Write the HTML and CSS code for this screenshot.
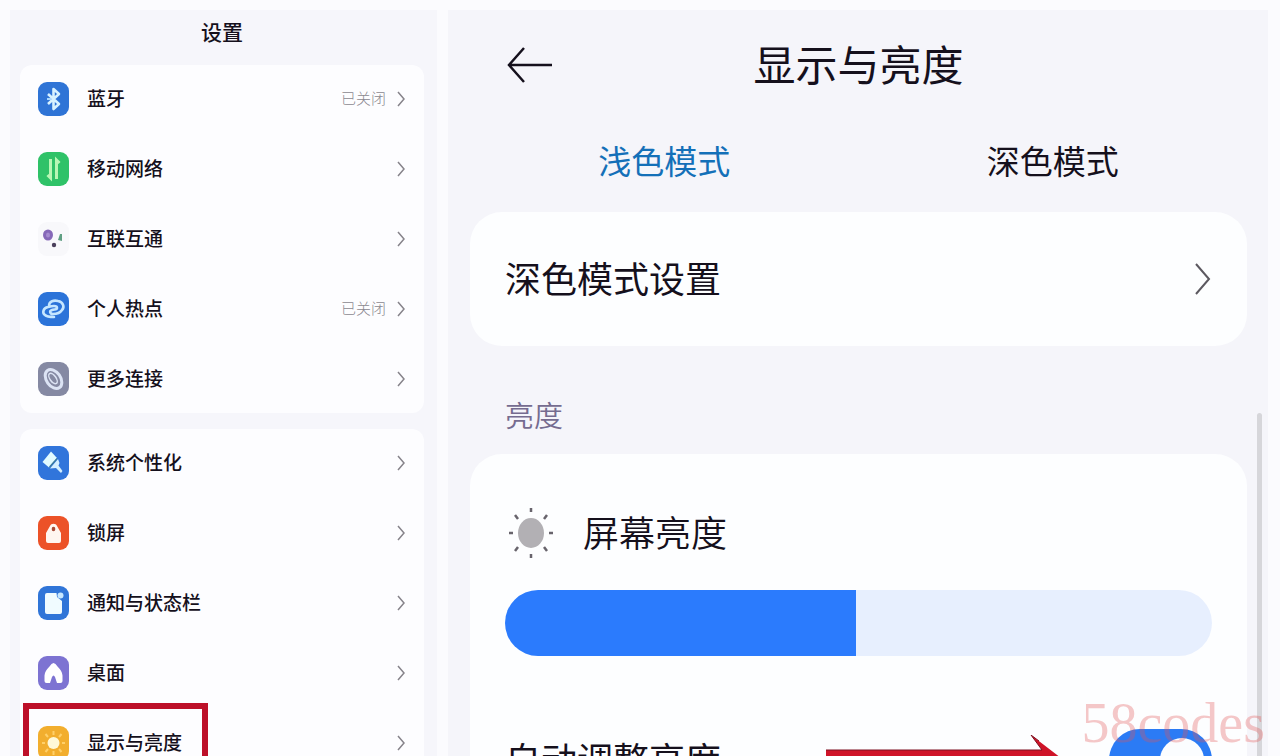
FILE: index.html
```html
<!DOCTYPE html>
<html lang="zh-CN">
<head>
  <meta charset="UTF-8">
  <title>设置</title>
  <link rel="stylesheet" href="styles.css">
</head>
<body>

<svg class="sprite" aria-hidden="true">
  <symbol id="chevron" viewBox="0 0 9 16">
    <path d="M1 1l6 7-6 7" fill="none" stroke="currentColor" stroke-width="1.5"/>
  </symbol>
</svg>

<div class="screens">

  <!-- Liste des réglages -->
  <nav class="panel settings">
    <h1 class="settings-title">设置</h1>

    <div class="group">
      <a class="row" href="#">
        <svg class="icon" viewBox="0 0 31 34">
          <rect width="31" height="34" rx="9" fill="#2f74d6"/>
          <path d="M10 12l11 10-5.500 5V7l5.500 5-11 10" fill="none" stroke="#d8f2ff" stroke-width="2.600" stroke-linejoin="round"/>
          <path d="M9 17h4" stroke="#a9d8ff" stroke-width="2"/>
        </svg>
        <span class="label">蓝牙</span>
        <span class="status">已关闭</span>
        <svg class="chevron"><use href="#chevron"/></svg>
      </a>
      <a class="row" href="#">
        <svg class="icon" viewBox="0 0 31 34">
          <rect width="31" height="34" rx="9" fill="#2fc268"/>
          <path d="M12.500 7v19l-3-3M18.500 27V8l3 3" fill="none" stroke="#b8f7b4" stroke-width="3"/>
        </svg>
        <span class="label">移动网络</span>
        <svg class="chevron"><use href="#chevron"/></svg>
      </a>
      <a class="row" href="#">
        <svg class="icon" viewBox="0 0 31 34">
          <rect width="31" height="34" rx="9" fill="#f8f8fb"/>
          <ellipse cx="10" cy="13" rx="5" ry="5.500" fill="#8668b8"/>
          <ellipse cx="10" cy="13" rx="2" ry="2.500" fill="#a58bd0"/>
          <path d="M22 12l2 0v7l-4-1z" fill="#5f9f83"/>
          <circle cx="16" cy="23" r="2.200" fill="#4b405c"/>
        </svg>
        <span class="label">互联互通</span>
        <svg class="chevron"><use href="#chevron"/></svg>
      </a>
      <a class="row" href="#">
        <svg class="icon" viewBox="0 0 31 34">
          <rect width="31" height="34" rx="9" fill="#2b73d9"/>
          <path d="M11 14c0-5 5-6 9-5 5 1 7 6 4 9-2 3-6 4-9 4-3 0-4-3-1-4 2-1 5 0 5-2 0-3-5-2-9-1-5 1-6 6-3 8 2 2 6 2 9 2" fill="none" stroke="#c5e6ff" stroke-width="2.600" stroke-linecap="round"/>
        </svg>
        <span class="label">个人热点</span>
        <span class="status">已关闭</span>
        <svg class="chevron"><use href="#chevron"/></svg>
      </a>
      <a class="row" href="#">
        <svg class="icon" viewBox="0 0 31 34">
          <rect width="31" height="34" rx="9" fill="#8589a3"/>
          <ellipse cx="15.500" cy="17" rx="7" ry="10.500" transform="rotate(-35 15.500 17)" fill="none" stroke="#dce3f4" stroke-width="3"/>
          <ellipse cx="15" cy="16.500" rx="3" ry="6" transform="rotate(-35 15 16.500)" fill="none" stroke="#dce3f4" stroke-width="1.500"/>
        </svg>
        <span class="label">更多连接</span>
        <svg class="chevron"><use href="#chevron"/></svg>
      </a>
    </div>

    <div class="group">
      <a class="row" href="#">
        <svg class="icon" viewBox="0 0 31 34">
          <rect width="31" height="34" rx="9" fill="#3175db"/>
          <path d="M4.500 16L13 5.500l6 6.500-8 9.500z" fill="#e2fbff"/>
          <path d="M12 22.500l8-9.500 1.500 4-1 2.500 4 5.500-1.500 2-5-5z" fill="#d4efff"/>
          <path d="M11.500 21l7.500-8.500" stroke="#3b7b9b" stroke-width="1.200"/>
        </svg>
        <span class="label">系统个性化</span>
        <svg class="chevron"><use href="#chevron"/></svg>
      </a>
      <a class="row" href="#">
        <svg class="icon" viewBox="0 0 31 34">
          <rect width="31" height="34" rx="9" fill="#ec5228"/>
          <path d="M8 25V17l4-7c1-3 6-3 7 0l4 7v8q0 2-2 2H10q-2 0-2-2z" fill="#fff6f0"/>
          <ellipse cx="15.500" cy="13" rx="1.800" ry="2.300" fill="#a94a35"/>
        </svg>
        <span class="label">锁屏</span>
        <svg class="chevron"><use href="#chevron"/></svg>
      </a>
      <a class="row" href="#">
        <svg class="icon" viewBox="0 0 31 34">
          <rect width="31" height="34" rx="9" fill="#3075d8"/>
          <path d="M7 9q0-2 2-2h9.500l.5 4 5 4v11q0 2-2 2H9q-2 0-2-2z" fill="#f0fbff"/>
          <circle cx="22.500" cy="9.500" r="3" fill="#c7e7ff"/>
        </svg>
        <span class="label">通知与状态栏</span>
        <svg class="chevron"><use href="#chevron"/></svg>
      </a>
      <a class="row" href="#">
        <svg class="icon" viewBox="0 0 31 34">
          <rect width="31" height="34" rx="9" fill="#7d73d2"/>
          <path d="M15.500 7q2 0 4 3.500 5 5 5 9V25q0 2-2 2H19l-2-6q-1.500-3-3 0l-2 6H8.500q-2 0-2-2v-5.500q0-4 5-9Q13.500 7 15.500 7z" fill="#fff"/>
        </svg>
        <span class="label">桌面</span>
        <svg class="chevron"><use href="#chevron"/></svg>
      </a>
      <a class="row row-marked" href="#">
        <svg class="icon" viewBox="0 0 31 34">
          <rect width="31" height="34" rx="9" fill="#f2ae2e"/>
          <circle cx="15.500" cy="17" r="6" fill="#fff9d8"/>
          <path d="M15.500 5v4M15.500 25v4M4 17h3M24 17h3M7.500 8l2.500 3M23.500 8L21 11M7.500 26l2.500-3M23.500 26L21 23" stroke="#ffd069" stroke-width="2"/>
        </svg>
        <span class="label">显示与亮度</span>
        <svg class="chevron"><use href="#chevron"/></svg>
      </a>
    </div>
  </nav>

  <!-- Affichage et luminosité -->
  <main class="panel display">
    <header class="display-header">
      <button class="back" type="button" aria-label="返回">
        <svg viewBox="0 0 48 38" width="48" height="38">
          <path d="M47 19H4M19 2L4 19l15 17" fill="none" stroke="currentColor" stroke-width="2.500"/>
        </svg>
      </button>
      <h2>显示与亮度</h2>
    </header>

    <div class="tabs">
      <button class="tab active" type="button">浅色模式</button>
      <button class="tab" type="button">深色模式</button>
    </div>

    <a class="card mode-link" href="#">
      <span>深色模式设置</span>
      <svg class="chevron-big" viewBox="0 0 17 34">
        <path d="M1 2l13 15L1 32" fill="none" stroke="currentColor" stroke-width="2"/>
      </svg>
    </a>

    <h3 class="section-title">亮度</h3>

    <div class="card brightness">
      <div class="brightness-head">
        <svg class="sun" viewBox="0 0 46 52">
          <ellipse cx="23" cy="26" rx="13" ry="15" fill="#b2b0b4"/>
          <path d="M23 1v4M23 47v4M1 26h4M41 26h4M7 8l3 4M39 8l-3 4M7 44l3-4M39 44l-3-4" stroke="#68646c" stroke-width="2.500"/>
        </svg>
        <label for="brightness">屏幕亮度</label>
      </div>
      <input class="slider" style="--fill: 49.6%" type="range" id="brightness" min="0" max="1000" value="496">
      <div class="auto">
        <label for="auto">自动调整亮度</label>
        <input class="switch" type="checkbox" id="auto" checked>
        <svg class="arrow" viewBox="0 0 236 46" aria-hidden="true">
          <path d="M1 15h216L206 0l30 23-30 23 11-16H1z" fill="#cf1428"/>
          <path d="M1 15h216L206 0l8 6" fill="none" stroke="#7d1020" stroke-width="1"/>
        </svg>
      </div>
    </div>

    <div class="scrollbar"></div>
  </main>

</div>

<div class="watermark">58codes</div>

</body>
</html>
```
FILE: styles.css
```css
/* --- BASE --- */
*,
*::before,
*::after {
  margin: 0;
  padding: 0;
  box-sizing: border-box;
}

body {
  height: 100vh;
  overflow: hidden;
  position: relative;
  background: #fbfbfe;
  color: #15101c;
  font-family: "Noto Sans CJK SC", sans-serif;
}

a {
  color: inherit;
  text-decoration: none;
}

button {
  border: none;
  background: none;
  font-family: inherit;
  color: inherit;
  cursor: pointer;
}

.sprite {
  display: none;
}

.screens {
  display: grid;
  grid-template-columns: 427fr 820fr;
  gap: 11px;
  height: 100%;
  padding: 10px 12px 0 10px;
}

.panel {
  position: relative;
  min-height: 0;
  overflow: hidden;
  background: #f5f5fa;
}

/* --- SETTINGS LIST --- */
.settings {
  padding: 0 13px 0 10px;
  background: #f6f6fb;
}

.settings-title {
  height: 55px;
  line-height: 42px;
  text-align: center;
  font-size: 21px;
  font-weight: 500;
}

.group {
  display: flex;
  flex-direction: column;
  gap: 36px;
  margin-bottom: 16px;
  padding: 17px 18px;
  border-radius: 12px;
  background: #fdfdff;
}

.row {
  position: relative;
  display: flex;
  align-items: center;
  height: 34px;
}

.icon {
  width: 31px;
  height: 34px;
  margin-right: 18px;
}

.label {
  flex: 1;
  padding-bottom: 4px;
  font-size: 19px;
  font-weight: 500;
}

.status {
  margin-right: 11px;
  padding-bottom: 4px;
  font-size: 15px;
  font-weight: 300;
  color: #8b8890;
}

.chevron {
  width: 9px;
  height: 16px;
  color: #86838a;
}

/* red frame round the selected row */
.row-marked::after {
  content: "";
  position: absolute;
  top: -23px;
  left: -15px;
  width: 185px;
  height: 80px;
  border: 6px solid #bd1029;
}

/* --- DISPLAY SCREEN --- */
.display {
  padding: 0 21px 0 22px;
}

.display-header {
  position: relative;
  display: flex;
  align-items: center;
  justify-content: center;
  height: 110px;
}

.display-header h2 {
  padding-bottom: 6px;
  font-size: 42px;
  font-weight: 400;
}

.back {
  position: absolute;
  left: 35px;
  display: flex;
}

.tabs {
  display: flex;
  height: 84px;
  margin-bottom: 8px;
}

.tab {
  flex: 1;
  padding-bottom: 4px;
  font-size: 33px;
}

.tab.active {
  color: #1470b8;
}

.card {
  padding: 40px 35px;
  border-radius: 32px;
  background: #fdfeff;
  font-size: 36px;
}

.mode-link {
  display: flex;
  align-items: center;
  justify-content: space-between;
  height: 134px;
}

.mode-link span,
.brightness label {
  padding-bottom: 4px;
}

.chevron-big {
  width: 17px;
  height: 34px;
  color: #5c5960;
}

.section-title {
  padding: 48px 35px 20px;
  line-height: 40px;
  font-size: 29px;
  font-weight: 350;
  color: #756c90;
}

.brightness {
  padding-top: 50px;
}

.brightness-head {
  display: flex;
  align-items: center;
  gap: 29px;
  height: 58px;
  padding-left: 3px;
  font-weight: 350;
}

.sun {
  width: 46px;
  height: 52px;
}

.slider {
  display: block;
  width: 100%;
  height: 66px;
  margin: 28px 0 73px;
  appearance: none;
  border-radius: 33px;
  background: linear-gradient(to right, #2b7bfd var(--fill), #e7effe var(--fill));
}

.slider::-webkit-slider-thumb {
  appearance: none;
  width: 1px;
  height: 66px;
}

.auto {
  position: relative;
  display: flex;
  align-items: center;
  justify-content: space-between;
  height: 62px;
}

.switch {
  position: relative;
  width: 103px;
  height: 62px;
  appearance: none;
  border-radius: 31px;
  background: #2b7bf5;
}

.switch::before {
  content: "";
  position: absolute;
  top: 9px;
  right: 8px;
  width: 44px;
  height: 44px;
  border-radius: 50%;
  background: #fbfdff;
}

.arrow {
  position: absolute;
  top: 6px;
  right: 151px;
  width: 236px;
  height: 46px;
}

.scrollbar {
  position: absolute;
  top: 403px;
  right: 6px;
  bottom: 0;
  width: 5px;
  border-radius: 3px 3px 0 0;
  background: #d6d6da;
}

.watermark {
  position: absolute;
  right: 15px;
  bottom: 0;
  line-height: 66px;
  font-family: "Liberation Serif", serif;
  font-size: 56px;
  color: rgba(226, 84, 84, 0.32);
  pointer-events: none;
}
```
